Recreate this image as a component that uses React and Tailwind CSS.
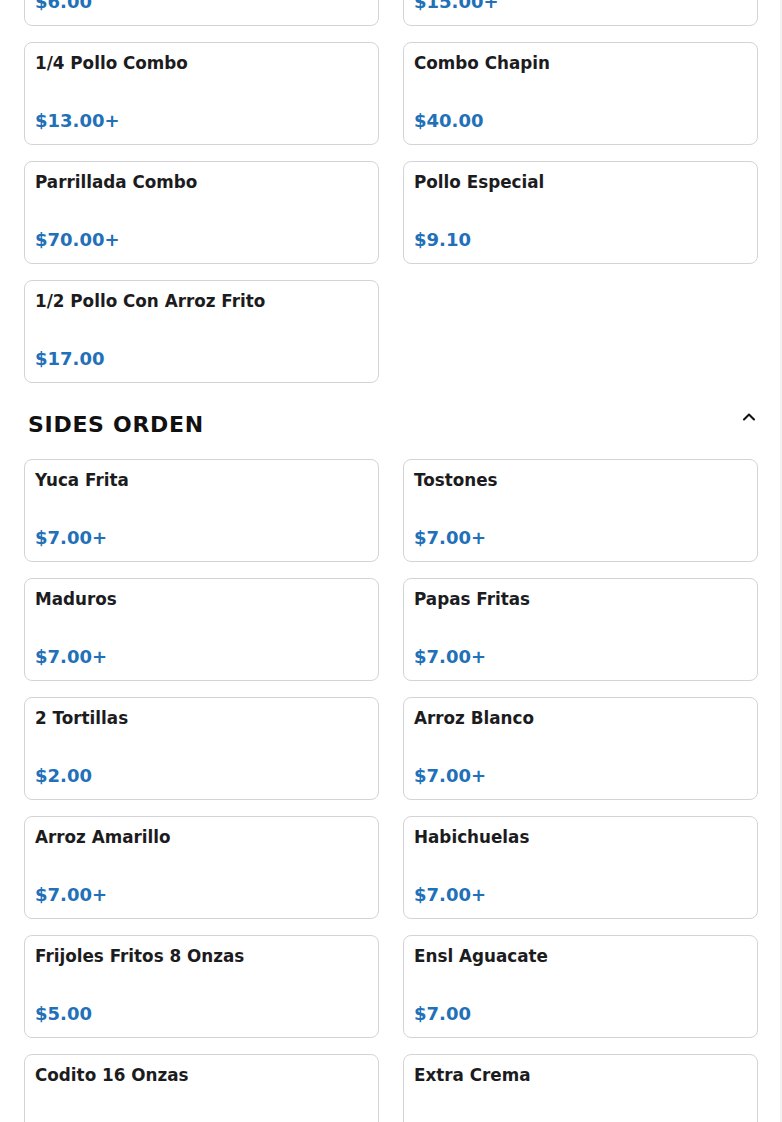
import { ChevronUp } from "lucide-react";

const topItems = [
  { name: "", price: "$6.00" },
  { name: "", price: "$15.00+" },
  { name: "1/4 Pollo Combo", price: "$13.00+" },
  { name: "Combo Chapin", price: "$40.00" },
  { name: "Parrillada Combo", price: "$70.00+" },
  { name: "Pollo Especial", price: "$9.10" },
  { name: "1/2 Pollo Con Arroz Frito", price: "$17.00" },
];

const sides = [
  { name: "Yuca Frita", price: "$7.00+" },
  { name: "Tostones", price: "$7.00+" },
  { name: "Maduros", price: "$7.00+" },
  { name: "Papas Fritas", price: "$7.00+" },
  { name: "2 Tortillas", price: "$2.00" },
  { name: "Arroz Blanco", price: "$7.00+" },
  { name: "Arroz Amarillo", price: "$7.00+" },
  { name: "Habichuelas", price: "$7.00+" },
  { name: "Frijoles Fritos 8 Onzas", price: "$5.00" },
  { name: "Ensl Aguacate", price: "$7.00" },
  { name: "Codito 16 Onzas", price: "$5.00" },
  { name: "Extra Crema", price: "$1.00" },
];

const ItemCard = ({ item }) => (
  <div className="h-[103px] flex flex-col justify-between rounded-lg border border-[#d4d4d8] bg-white px-[10px] pt-[8px] pb-[9px]">
    <p className="text-[16.8px] leading-6 font-bold text-[#1c1c1e]">{item.name}</p>
    <p className="text-[18px] leading-7 font-bold text-[#2170b8]">{item.price}</p>
  </div>
);

export default function App() {
  return (
    <div
      className="h-[1122px] overflow-hidden bg-white shadow-[inset_-2px_0_0_#f2f2f2]"
      style={{ fontFamily: '"DejaVu Sans", sans-serif' }}
    >
      <div className="px-6 -mt-[77px]">
        <div className="grid grid-cols-2 gap-x-6 gap-y-4">
          {topItems.map((item, i) => (
            <ItemCard key={i} item={item} />
          ))}
        </div>

        <div className="flex items-center justify-between pl-1 pt-[26px] pb-[18px]">
          <h2 className="text-[22px] leading-8 font-bold tracking-[0.7px] text-[#111]">SIDES ORDEN</h2>
          <ChevronUp className="w-5 h-5 text-[#111] -mt-[16px] -mr-[1px]" strokeWidth={2.5} />
        </div>

        <div className="grid grid-cols-2 gap-x-6 gap-y-4">
          {sides.map((item, i) => (
            <ItemCard key={i} item={item} />
          ))}
        </div>
      </div>
    </div>
  );
}
